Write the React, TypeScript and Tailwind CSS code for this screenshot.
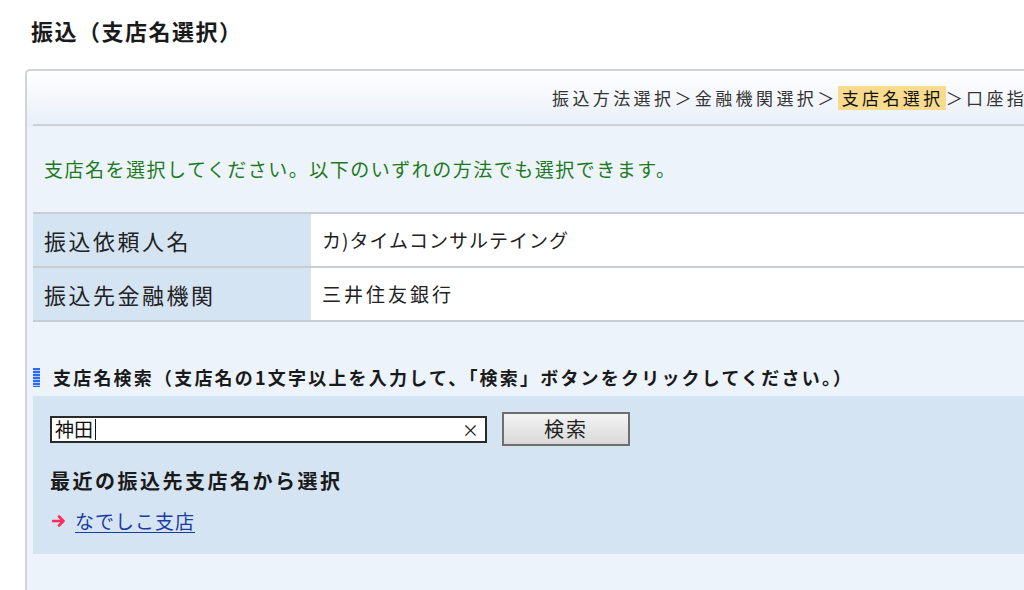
import React from "react";

const font = "font-['Noto_Sans_CJK_JP','Noto_Sans',sans-serif]";

const steps = ["振込方法選択", "金融機関選択", "支店名選択", "口座指定"];

const App = () => {
  return (
    <div className={`w-[1024px] h-[590px] overflow-hidden bg-white text-[#222] ${font}`}>
      {/* タイトル */}
      <div className="h-[69px] pl-[31px] pt-[14px]">
        <h1 className="text-[22px] leading-[32px] font-bold tracking-[1.5px] text-[#1a1a1a]">振込（支店名選択）</h1>
      </div>

      {/* パネル */}
      <div className="ml-[25px] w-[1020px] h-[521px] border-t-2 border-l-2 border-[#d0d4d9] rounded-tl-[5px] bg-[linear-gradient(to_bottom,#ffffff_0px,#e8eff8_56px,#edf3fb_56px)] pl-[6px]">
        {/* ステップ */}
        <div className="h-[55px] flex items-center pl-[519px] whitespace-nowrap border-b-2 border-[#cdd2d8] text-[17px] tracking-[3.4px] text-[#333]">
          {steps.map((s, i) => (
            <React.Fragment key={s}>
              {i > 0 && <span>＞</span>}
              {s === "支店名選択" ? (
                <span className="bg-[#f8db8e] pl-[4px] pr-[2px] leading-[24px] text-[#111]">{s}</span>
              ) : (
                <span>{s}</span>
              )}
            </React.Fragment>
          ))}
        </div>

        {/* 説明 */}
        <div className="h-[86px] flex items-center pl-[11px] text-[19px] tracking-[1.5px] text-[#1c7a1c]">
          支店名を選択してください。以下のいずれの方法でも選択できます。
        </div>

        {/* 情報テーブル */}
        <div className="border-t-2 border-[#c8cdd3]">
          <div className="flex h-[54px] border-b-2 border-[#c8cdd3]">
            <div className="w-[278px] bg-[#d5e4f3] flex items-center pl-[11px] text-[22px] tracking-[2.5px]">振込依頼人名</div>
            <div className="flex-1 bg-white flex items-center pl-[11px] text-[19px] tracking-[1px]">カ)タイムコンサルテイング</div>
          </div>
          <div className="flex h-[54px] border-b-2 border-[#c8cdd3]">
            <div className="w-[278px] bg-[#d5e4f3] flex items-center pl-[11px] text-[22px] tracking-[2.5px]">振込先金融機関</div>
            <div className="flex-1 bg-white flex items-center pl-[11px] text-[19px] tracking-[3px]">三井住友銀行</div>
          </div>
        </div>

        {/* 支店名検索 */}
        <div className="flex items-center gap-[13px] pt-[43px] mb-[7px]">
          <span className="w-[7px] h-[19px] bg-[repeating-linear-gradient(to_bottom,#2c6cf2_0px,#2c6cf2_2px,#b4ccff_2px,#b4ccff_3px)]" />
          <h2 className="text-[18px] leading-[24px] font-bold tracking-[2.2px] whitespace-nowrap text-[#1a1a1a]">
            支店名検索（支店名の1文字以上を入力して、「検索」ボタンをクリックしてください。）
          </h2>
        </div>

        <div className="bg-[#d5e4f3] h-[158px] pl-[17px] pt-[16px]">
          <div className="flex items-center gap-[15px] h-[34px]">
            <div className="w-[437px] h-[27px] border-2 border-[#2a2a2a] bg-white flex items-center pl-[3px] pr-[6px]">
              <span className="text-[19px] leading-[22px] text-[#111]">神田</span>
              <span className="w-px h-[21px] bg-[#111] ml-[2px]" />
              <span className="ml-auto text-[17px] leading-none text-[#111]">×</span>
            </div>
            <button className="w-[128px] h-[34px] border-2 border-[#6f6f6f] bg-[linear-gradient(to_bottom,#f3f3f3,#d9d9d9)] text-[20px] tracking-[2px] text-[#222] leading-none">
              検索
            </button>
          </div>
          <div className="mt-[23px] text-[20px] leading-[24px] font-bold tracking-[2.5px] text-[#1a1a1a]">
            最近の振込先支店名から選択
          </div>
          <div className="mt-[16px] flex items-center gap-[9px] leading-[24px]">
            <svg width="14" height="14" viewBox="0 0 14 14" className="ml-[2px]">
              <path d="M1 7h10M7 2.5l4.5 4.5L7 11.5" fill="none" stroke="#ff2d5c" strokeWidth="2.6" strokeLinecap="round" strokeLinejoin="round" />
            </svg>
            <a href="#" className="text-[19px] tracking-[1px] text-[#1b3c9e] underline underline-offset-[3px]">
              なでしこ支店
            </a>
          </div>
        </div>
      </div>
    </div>
  );
};

export default App;
